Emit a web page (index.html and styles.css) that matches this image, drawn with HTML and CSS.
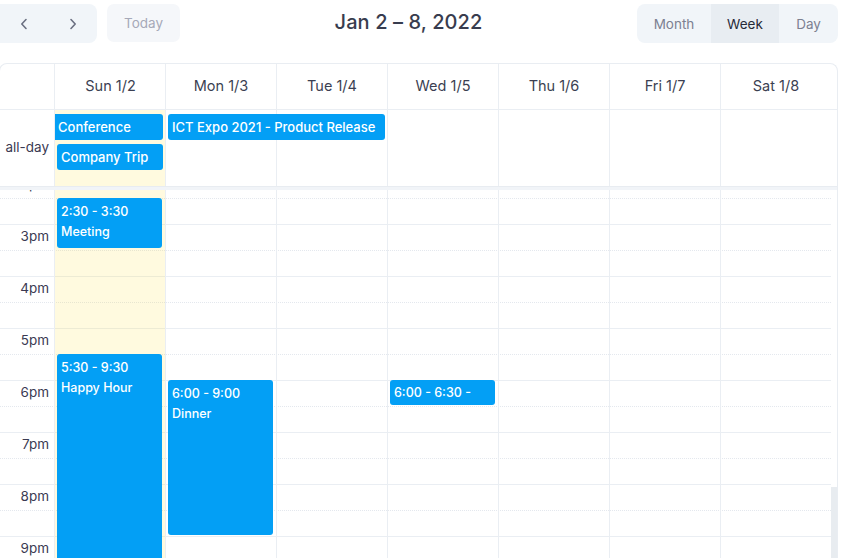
FILE: index.html
```html
<!DOCTYPE html>
<html>
<head>
<meta charset="utf-8">
<link rel="stylesheet" href="styles.css">
</head>
<body>
<div class="page">
  <div class="toolbar">
    <div class="tb-left">
      <div class="nav-group">
        <button class="nav-btn" aria-label="prev"><svg width="10" height="12" viewBox="0 0 10 12"><path d="M7 1.5 L2.8 6 L7 10.5" fill="none" stroke="#6b7082" stroke-width="1.6" stroke-linecap="round" stroke-linejoin="round"/></svg></button>
        <button class="nav-btn" aria-label="next"><svg width="10" height="12" viewBox="0 0 10 12"><path d="M3 1.5 L7.2 6 L3 10.5" fill="none" stroke="#6b7082" stroke-width="1.6" stroke-linecap="round" stroke-linejoin="round"/></svg></button>
      </div>
      <button class="today-btn">Today</button>
    </div>
    <h2 class="title">Jan 2 – 8, 2022</h2>
    <div class="view-group">
      <button class="view-btn">Month</button>
      <button class="view-btn active">Week</button>
      <button class="view-btn">Day</button>
    </div>
  </div>

  <div class="cal">
    <div class="head-row">
      <div class="gutter"></div>
      <div class="day-head">Sun 1/2</div>
      <div class="day-head">Mon 1/3</div>
      <div class="day-head">Tue 1/4</div>
      <div class="day-head">Wed 1/5</div>
      <div class="day-head">Thu 1/6</div>
      <div class="day-head">Fri 1/7</div>
      <div class="day-head">Sat 1/8</div>
      <div class="spacer"></div>
    </div>

    <div class="allday-row">
      <div class="allday-label">all-day</div>
      <div class="ad-cell today c1"></div>
      <div class="ad-cell c2"></div>
      <div class="ad-cell c3"></div>
      <div class="ad-cell c4"></div>
      <div class="ad-cell c5"></div>
      <div class="ad-cell c6"></div>
      <div class="ad-cell c7"></div>
      <div class="ad-ev ev-conf">Conference</div>
      <div class="ad-ev ev-trip">Company Trip</div>
      <div class="ad-ev ev-expo">ICT Expo 2021 - Product Release</div>
    </div>

    <div class="divider"></div>

    <div class="tg-viewport">
      <div class="tg-inner">
        <div class="slots">
          <div class="slot major"><span class="slot-label">2pm</span></div>
          <div class="slot minor"></div>
          <div class="slot major"><span class="slot-label">3pm</span></div>
          <div class="slot minor"></div>
          <div class="slot major"><span class="slot-label">4pm</span></div>
          <div class="slot minor"></div>
          <div class="slot major"><span class="slot-label">5pm</span></div>
          <div class="slot minor"></div>
          <div class="slot major"><span class="slot-label">6pm</span></div>
          <div class="slot minor"></div>
          <div class="slot major"><span class="slot-label">7pm</span></div>
          <div class="slot minor"></div>
          <div class="slot major"><span class="slot-label">8pm</span></div>
          <div class="slot minor"></div>
          <div class="slot major"><span class="slot-label">9pm</span></div>
          <div class="slot minor"></div>
        </div>
        <div class="day-col today c1">
          <div class="ev" style="top:26px;height:50px"><div class="ev-time">2:30 - 3:30</div><div class="ev-title">Meeting</div></div>
          <div class="ev" style="top:182px;height:208px"><div class="ev-time">5:30 - 9:30</div><div class="ev-title">Happy Hour</div></div>
        </div>
        <div class="day-col c2">
          <div class="ev" style="top:208px;height:155px"><div class="ev-time">6:00 - 9:00</div><div class="ev-title">Dinner</div></div>
        </div>
        <div class="day-col c3"></div>
        <div class="day-col c4">
          <div class="ev short" style="top:208px;height:25px"><div class="ev-time">6:00 - 6:30 -</div></div>
        </div>
        <div class="day-col c5"></div>
        <div class="day-col c6"></div>
        <div class="day-col c7"></div>
      </div>
      <div class="scroll-thumb"></div>
    </div>
  </div>
</div>
</body>
</html>
```

FILE: styles.css
```css
* { box-sizing: border-box; }
html, body { margin: 0; padding: 0; background: #fff; }
body {
  font-family: "Inter", "Noto Sans", sans-serif;
  color: #3b3f52;
  overflow: hidden;
  width: 841px;
  height: 558px;
}
.page { width: 838px; }
button { font-family: inherit; border: 0; cursor: pointer; }

.toolbar {
  display: flex;
  align-items: center;
  justify-content: space-between;
  height: 39px;
  margin-top: 4px;
}
.tb-left { display: flex; align-items: center; gap: 10px; }
.nav-group {
  display: flex;
  margin-left: -8px;
  width: 105px;
  height: 39px;
  background: #f1f5f9;
  border-radius: 8px;
  padding-left: 8px;
}
.nav-btn {
  flex: 1;
  background: transparent;
  display: flex;
  align-items: center;
  justify-content: center;
  padding: 0;
}
.today-btn {
  width: 73px;
  height: 38px;
  background: #f5f7fa;
  color: #a6a9b8;
  font-size: 13.5px;
  border-radius: 7px;
  align-self: flex-start;
}
.title {
  margin: 0 0 3px 0;
  font-size: 20px;
  font-weight: 500;
  color: #383c4e;
  letter-spacing: 0.1px;
}
.view-group {
  display: flex;
  height: 39px;
  background: #f1f5f9;
  border-radius: 8px;
  overflow: hidden;
}
.view-btn {
  background: transparent;
  color: #7c8091;
  font-size: 13.5px;
  padding: 0;
}
.view-btn:nth-child(1) { width: 74px; }
.view-btn:nth-child(2) { width: 68px; }
.view-btn:nth-child(3) { width: 59px; }
.view-btn.active { background: #e8edf2; color: #262a38; }

.cal {
  margin-top: 20px;
  margin-left: -1px;
  width: 839px;
  height: 496px;
  border: 1px solid #e9edf2;
  border-bottom: 0;
  border-radius: 8px 8px 0 0;
  overflow: hidden;
}

.head-row,
.allday-row,
.tg-inner {
  display: grid;
  grid-template-columns: 54px repeat(7, 111px) 6px;
}
.head-row { height: 46px; border-bottom: 1px solid #eaeef3; }
.day-head {
  border-left: 1px solid #eaeef3;
  display: flex;
  align-items: center;
  justify-content: center;
  font-size: 14.5px;
  color: #3b3f52;
  padding-bottom: 3px;
}
.head-row .day-head:nth-child(2) { padding-left: 1px; }

.allday-row {
  height: 76px;
  grid-template-rows: 4px 26px 4px 26px 16px;
}
.allday-label {
  grid-column: 1;
  grid-row: 1 / -1;
  display: flex;
  align-items: center;
  justify-content: flex-end;
  padding-right: 5px;
  padding-bottom: 3px;
  font-size: 13.5px;
  color: #3b3a52;
}
.ad-cell { grid-row: 1 / -1; border-left: 1px solid #eaeef3; }
.c1 { grid-column: 2; }
.c2 { grid-column: 3; }
.c3 { grid-column: 4; }
.c4 { grid-column: 5; }
.c5 { grid-column: 6; }
.c6 { grid-column: 7; }
.c7 { grid-column: 8; }
.today { background: rgba(255, 220, 40, 0.15); }

.ad-ev {
  background: #039ff5;
  color: #fff;
  font-size: 13px;
  font-weight: 500;
  display: flex;
  align-items: center;
  border-radius: 3px;
  white-space: nowrap;
  overflow: hidden;
}
.ev-conf {
  grid-column: 2; grid-row: 2;
  margin-left: 1px; margin-right: 2px;
  border-radius: 0 3px 3px 0;
  padding-left: 3px;
}
.ev-trip {
  grid-column: 2; grid-row: 4;
  margin-left: 3px; margin-right: 2px;
  padding-left: 4px;
}
.ev-expo {
  grid-column: 3 / 5; grid-row: 2;
  margin-left: 3px; margin-right: 2px;
  padding-left: 4px;
}

.divider {
  height: 4px;
  background: #f1f4f8;
  border-top: 1px solid #e8ecf1;
}

.tg-viewport {
  position: relative;
  height: 370px;
  overflow: hidden;
}
.tg-inner {
  margin-top: -18px;
  height: 416px;
}
.slots {
  grid-column: 1 / 9;
  grid-row: 1;
}
.slot {
  height: 26px;
  display: flex;
  align-items: center;
  justify-content: flex-start;
}
.slot.major { border-top: 1px solid #eaeef3; }
.slot.minor { border-top: 1px dotted #e4e8ee; }
.slot-label {
  width: 54px;
  text-align: right;
  padding-right: 5px;
  padding-bottom: 3px;
  font-size: 13.5px;
  color: #3b3a52;
}
.day-col {
  grid-row: 1;
  position: relative;
  border-left: 1px solid #eaeef3;
}
.ev {
  position: absolute;
  left: 2px;
  right: 3px;
  background: #039ff5;
  color: #fff;
  border-radius: 3px;
  padding: 4px 4px 3px;
  font-size: 12.5px;
  font-weight: 500;
  overflow: hidden;
}
.ev-time, .ev-title { line-height: 20px; white-space: nowrap; }
.ev.short { padding-top: 3px; }

.scroll-thumb {
  position: absolute;
  right: 0;
  width: 6px;
  top: 297px;
  bottom: 0;
  background: #e8ecf0;
}
```
